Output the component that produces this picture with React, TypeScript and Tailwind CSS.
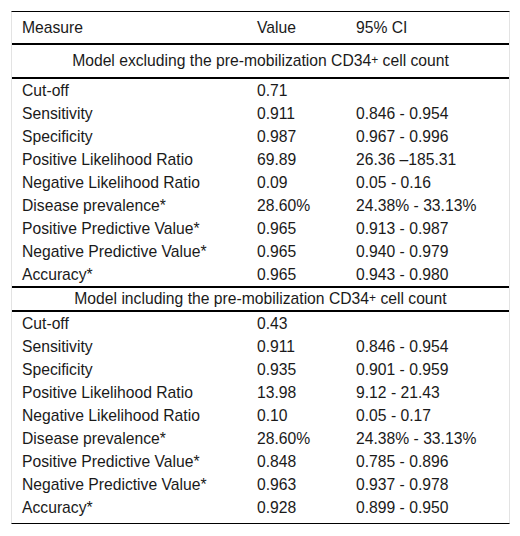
import React from "react";

type Row = [string, string, string];

const excluding: Row[] = [
  ["Cut-off", "0.71", ""],
  ["Sensitivity", "0.911", "0.846 - 0.954"],
  ["Specificity", "0.987", "0.967 - 0.996"],
  ["Positive Likelihood Ratio", "69.89", "26.36 \u2013185.31"],
  ["Negative Likelihood Ratio", "0.09", "0.05 - 0.16"],
  ["Disease prevalence*", "28.60%", "24.38% - 33.13%"],
  ["Positive Predictive Value*", "0.965", "0.913 - 0.987"],
  ["Negative Predictive Value*", "0.965", "0.940 - 0.979"],
  ["Accuracy*", "0.965", "0.943 - 0.980"],
];

const including: Row[] = [
  ["Cut-off", "0.43", ""],
  ["Sensitivity", "0.911", "0.846 - 0.954"],
  ["Specificity", "0.935", "0.901 - 0.959"],
  ["Positive Likelihood Ratio", "13.98", "9.12 - 21.43"],
  ["Negative Likelihood Ratio", "0.10", "0.05 - 0.17"],
  ["Disease prevalence*", "28.60%", "24.38% - 33.13%"],
  ["Positive Predictive Value*", "0.848", "0.785 - 0.896"],
  ["Negative Predictive Value*", "0.963", "0.937 - 0.978"],
  ["Accuracy*", "0.928", "0.899 - 0.950"],
];

const Cols = ({ row, h }: { row: Row; h: string }) => (
  <div className={`flex items-center ${h}`}>
    <div className="w-[235px] pl-[10px]">{row[0]}</div>
    <div className="w-[99px] pl-[10px]">{row[1]}</div>
    <div className="flex-1 pl-[10px]">{row[2]}</div>
  </div>
);

const Section = ({ title, h }: { title: string; h: string }) => (
  <div className={`flex items-center justify-center border-y-2 border-black ${h}`}>
    <span>
      {title}
      <sup className="text-[12px] relative -top-[2px] align-baseline">+</sup> cell count
    </span>
  </div>
);

export default function App() {
  return (
    <div className="w-[520px] h-[536px] bg-white pt-[11px] px-[11px] font-['Liberation_Sans',Arial,sans-serif] text-[15.7px] text-[#1a1a1a] leading-[18px]">
      <div className="w-[499px] border-t border-t-black border-x border-x-[#e3e3e3] border-b border-b-black">
        <Cols row={["Measure", "Value", "95% CI"]} h="h-[31px]" />
        <Section title="Model excluding the pre-mobilization CD34" h="h-[36px]" />
        <div>
          {excluding.map((r, i) => (
            <Cols key={i} row={r} h="h-[23px]" />
          ))}
        </div>
        <Section title="Model including the pre-mobilization CD34" h="h-[26px]" />
        <div className="pb-[4px]">
          {including.map((r, i) => (
            <Cols key={i} row={r} h="h-[23px]" />
          ))}
        </div>
      </div>
    </div>
  );
}
